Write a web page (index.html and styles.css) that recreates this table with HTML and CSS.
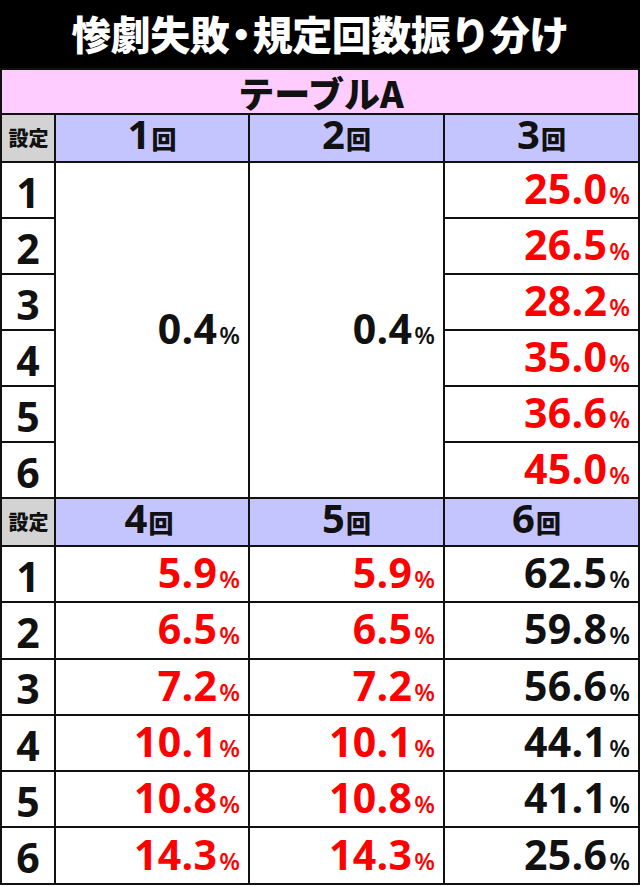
FILE: index.html
```html
<!DOCTYPE html>
<html lang="ja">
<head>
<meta charset="utf-8">
<link rel="stylesheet" href="styles.css">
</head>
<body>
<div class="page">
  <h1 class="title">惨劇失敗<span class="dot">・</span>規定回数振り分け</h1>
  <table class="grid">
    <colgroup>
      <col class="c0"><col class="c1"><col class="c2"><col class="c3">
    </colgroup>
    <tr class="band"><td colspan="4">テーブルA</td></tr>
    <tr class="head">
      <td class="set">設定</td>
      <td><span class="n">1</span><span class="k">回</span></td>
      <td><span class="n">2</span><span class="k">回</span></td>
      <td><span class="n">3</span><span class="k">回</span></td>
    </tr>
    <tr class="row">
      <td class="lv">1</td>
      <td class="val merged" rowspan="6">0.4<span class="pc">%</span></td>
      <td class="val merged" rowspan="6">0.4<span class="pc">%</span></td>
      <td class="val red">25.0<span class="pc">%</span></td>
    </tr>
    <tr class="row"><td class="lv">2</td><td class="val red">26.5<span class="pc">%</span></td></tr>
    <tr class="row"><td class="lv">3</td><td class="val red">28.2<span class="pc">%</span></td></tr>
    <tr class="row"><td class="lv">4</td><td class="val red">35.0<span class="pc">%</span></td></tr>
    <tr class="row"><td class="lv">5</td><td class="val red">36.6<span class="pc">%</span></td></tr>
    <tr class="row"><td class="lv">6</td><td class="val red">45.0<span class="pc">%</span></td></tr>
    <tr class="head">
      <td class="set">設定</td>
      <td class="left1"><span class="n">4</span><span class="k">回</span></td>
      <td><span class="n">5</span><span class="k">回</span></td>
      <td class="left3"><span class="n">6</span><span class="k">回</span></td>
    </tr>
    <tr class="row2"><td class="lv">1</td><td class="val red">5.9<span class="pc">%</span></td><td class="val red">5.9<span class="pc">%</span></td><td class="val">62.5<span class="pc">%</span></td></tr>
    <tr class="row2"><td class="lv">2</td><td class="val red">6.5<span class="pc">%</span></td><td class="val red">6.5<span class="pc">%</span></td><td class="val">59.8<span class="pc">%</span></td></tr>
    <tr class="row2"><td class="lv">3</td><td class="val red">7.2<span class="pc">%</span></td><td class="val red">7.2<span class="pc">%</span></td><td class="val">56.6<span class="pc">%</span></td></tr>
    <tr class="row2"><td class="lv">4</td><td class="val red">10.1<span class="pc">%</span></td><td class="val red">10.1<span class="pc">%</span></td><td class="val">44.1<span class="pc">%</span></td></tr>
    <tr class="row2"><td class="lv">5</td><td class="val red">10.8<span class="pc">%</span></td><td class="val red">10.8<span class="pc">%</span></td><td class="val">41.1<span class="pc">%</span></td></tr>
    <tr class="row2"><td class="lv">6</td><td class="val red">14.3<span class="pc">%</span></td><td class="val red">14.3<span class="pc">%</span></td><td class="val">25.6<span class="pc">%</span></td></tr>
  </table>
</div>
</body>
</html>
```

FILE: styles.css
```css
html, body {
  margin: 0;
  padding: 0;
  background: #ffffff;
}
.page {
  width: 640px;
  font-family: "Open Sans", "Noto Sans CJK JP", sans-serif;
  color: #111;
}
.title {
  margin: 0;
  height: 68px;
  overflow: hidden;
  background: #000;
  color: #fff;
  font-family: "Noto Sans CJK JP", sans-serif;
  font-weight: 900;
  font-size: 40px;
  line-height: 66px;
  text-align: center;
  letter-spacing: -0.5px;
}
.dot {
  margin: 0 -8px;
}
.grid {
  width: 639px;
  border-collapse: collapse;
  table-layout: fixed;
}
.c0 { width: 54px; }
.c1 { width: 194px; }
.c2 { width: 195px; }
.c3 { width: 195px; }
.grid td {
  border: 2px solid #111;
  padding: 0;
  line-height: 36px;
  vertical-align: middle;
  white-space: nowrap;
}
.band td {
  height: 42px;
  background: #ffccff;
  text-align: center;
  font-family: "Noto Sans CJK JP", sans-serif;
  font-weight: 900;
  font-size: 36px;
  line-height: 40px;
  padding-left: 2px;
  padding-top: 1px;
}
.head td {
  height: 46px;
  background: #c4c4ff;
  text-align: center;
}
.head td.set {
  background: #d3d3d3;
  font-family: "Noto Sans CJK JP", sans-serif;
  font-weight: 900;
  font-size: 20px;
  padding-left: 1px;
}
.head td.left1 { padding-right: 6px; }
.head td.left3 { padding-right: 10px; }
.n {
  font-weight: 700;
  font-size: 40px;
}
.k {
  font-family: "Noto Sans CJK JP", sans-serif;
  font-weight: 900;
  font-size: 25px;
  margin-left: 1px;
}
.row td { height: 51px; padding-top: 3px; }
.row td.merged { height: auto; }
.row2 td { height: 51.3px; padding-top: 3px; }
.lv {
  text-align: center;
  font-weight: 700;
  font-size: 41px;
}
.val {
  text-align: right;
  font-weight: 700;
  font-size: 41px;
  padding-right: 8px !important;
  letter-spacing: 0.3px;
}
.red { color: #ff0000; }
.pc {
  font-size: 24px;
  font-weight: 600;
  margin-left: 2px;
  letter-spacing: 0;
}
```
